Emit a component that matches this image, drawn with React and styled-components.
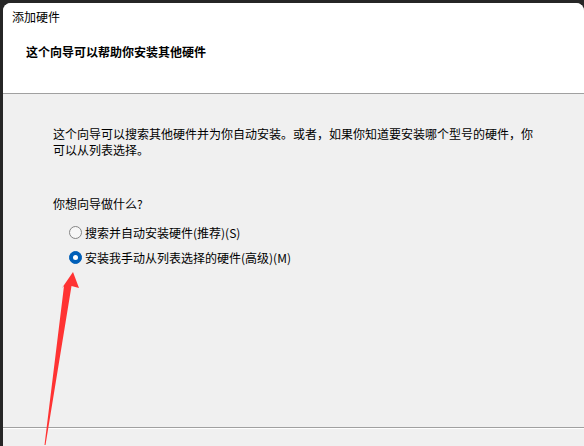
import React from "react";
import styled, { createGlobalStyle } from "styled-components";

const Global = createGlobalStyle`
  html, body { margin: 0; padding: 0; background: #262626; }
  body { width: 584px; height: 446px; overflow: hidden; font-family: "Noto Sans CJK SC", "Noto Sans", sans-serif; }
  #root { position: relative; width: 584px; height: 446px; }
`;

const Window = styled.div`
  margin: 3px 0 0 3px;
  width: 581px;
  height: 443px;
  background: #f0f0f0;
  border-radius: 8px 8px 0 0;
  overflow: hidden;
  display: flex;
  flex-direction: column;
  color: #000;
  font-size: 12px;
`;

const Header = styled.div`
  background: #fff;
  height: 90px;
  border-bottom: 1px solid #a0a0a0;
`;

const TitleBar = styled.div`
  height: 28px;
  line-height: 28px;
  padding-left: 9px;
  font-size: 12px;
`;

const HeaderTitle = styled.div`
  margin-top: 13px;
  padding-left: 23px;
  font-weight: bold;
  line-height: 16px;
`;

const Body = styled.div`
  flex: 1;
  padding-left: 50px;
  padding-top: 32px;
`;

const Paragraph = styled.p`
  margin: 0;
  width: 484px;
  line-height: 16px;
`;

const Question = styled.div`
  margin-top: 38px;
  line-height: 16px;
`;

const Options = styled.div`
  margin-top: 8px;
  padding-left: 16px;
  display: flex;
  flex-direction: column;
`;

const Row = styled.label`
  display: flex;
  align-items: center;
  height: 25px;
  gap: 3px;
`;

const Radio = styled.span`
  width: 13px;
  height: 13px;
  box-sizing: border-box;
  border-radius: 50%;
  display: flex;
  align-items: center;
  justify-content: center;
  background: ${(p) => (p.$checked ? "#005fb8" : "#f7f7f7")};
  border: 1px solid ${(p) => (p.$checked ? "#005fb8" : "#858585")};
  &::after {
    content: "";
    display: ${(p) => (p.$checked ? "block" : "none")};
    width: 5px;
    height: 5px;
    border-radius: 50%;
    background: #fff;
  }
`;

const Footer = styled.div`
  height: 18px;
  border-top: 1px solid #a0a0a0;
  box-shadow: inset 0 1px 0 #fff;
`;

const Arrow = styled.svg`
  position: absolute;
  left: 0;
  top: 0;
  pointer-events: none;
`;

export default function App() {
  return (
    <>
      <Global />
      <Window>
        <Header>
          <TitleBar>添加硬件</TitleBar>
          <HeaderTitle>这个向导可以帮助你安装其他硬件</HeaderTitle>
        </Header>
        <Body>
          <Paragraph>
            这个向导可以搜索其他硬件并为你自动安装。或者，如果你知道要安装哪个型号的硬件，你可以从列表选择。
          </Paragraph>
          <Question>你想向导做什么?</Question>
          <Options>
            <Row>
              <Radio />
              <span>搜索并自动安装硬件(推荐)(S)</span>
            </Row>
            <Row>
              <Radio $checked />
              <span>安装我手动从列表选择的硬件(高级)(M)</span>
            </Row>
          </Options>
        </Body>
        <Footer />
      </Window>
      <Arrow width="584" height="446" viewBox="0 0 584 446">
        <polygon
          points="73,269 79,285 71.5,283 45.5,442 44.5,442 64,283 62,285"
          fill="#ff3333"
        />
      </Arrow>
    </>
  );
}
